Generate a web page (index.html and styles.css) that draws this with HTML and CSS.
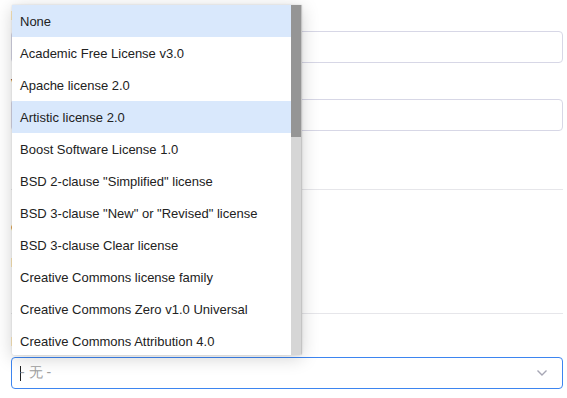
FILE: index.html
```html
<!DOCTYPE html>
<html>
<head>
<meta charset="utf-8">
<link rel="stylesheet" href="styles.css">
</head>
<body>
<div class="page">
  <form class="form">
    <div class="field">
      <label class="label">Name</label>
      <input class="input" type="text">
    </div>
    <div class="field">
      <label class="label">Version</label>
      <input class="input" type="text">
    </div>
    <div class="section sep">
      <div class="opt">Open source</div>
      <div class="opt">Proprietary</div>
    </div>
    <div class="field sep">
      <label class="label">License</label>
      <div class="select">
        <span class="caret"></span><span class="placeholder">- 无 -</span>
        <svg class="chev" width="12" height="8" viewBox="0 0 12 8"><path d="M1.5 1.5 L6 6 L10.5 1.5" fill="none" stroke="#a6a6b4" stroke-width="1.4"/></svg>
      </div>
    </div>
  </form>

  <div class="listbox">
    <ul class="items">
      <li class="item hl">None</li>
      <li class="item">Academic Free License v3.0</li>
      <li class="item">Apache license 2.0</li>
      <li class="item hl">Artistic license 2.0</li>
      <li class="item">Boost Software License 1.0</li>
      <li class="item">BSD 2-clause "Simplified" license</li>
      <li class="item">BSD 3-clause "New" or "Revised" license</li>
      <li class="item">BSD 3-clause Clear license</li>
      <li class="item">Creative Commons license family</li>
      <li class="item">Creative Commons Zero v1.0 Universal</li>
      <li class="item">Creative Commons Attribution 4.0</li>
    </ul>
    <div class="scrollbar"><div class="thumb"></div></div>
  </div>
</div>
</body>
</html>
```
FILE: styles.css
```css
html, body {
  margin: 0;
  padding: 0;
  background: #fff;
}
body {
  font-family: "Liberation Sans", Arial, sans-serif;
  color: #222;
}
.page {
  position: relative;
  width: 567px;
  height: 398px;
  overflow: hidden;
}
.form {
  display: flex;
  flex-direction: column;
  padding: 8px 4px 0 11px;
}
.field {
  display: flex;
  flex-direction: column;
}
.field + .field {
  margin-top: 13px;
}
.label {
  font-size: 13px;
  line-height: 15px;
  color: #333;
  height: 15px;
  margin-bottom: 8px;
}
.input {
  box-sizing: border-box;
  height: 32px;
  border: 1px solid #d7d7e6;
  border-radius: 4px;
  background: #fff;
  margin: 0;
  padding: 0 8px;
}
.sep {
  border-top: 1px solid #e6e6ea;
}
.section {
  margin-top: 58px;
  height: 124px;
  display: flex;
  flex-direction: column;
  gap: 20px;
  padding-top: 30px;
  box-sizing: border-box;
  font-size: 13px;
}
.field.sep {
  margin-top: 0;
  padding-top: 20px;
}
.select {
  box-sizing: border-box;
  height: 32px;
  border: 1px solid #3d85f0;
  border-radius: 4px;
  display: flex;
  align-items: center;
  padding: 0 14px 0 8px;
}
.caret {
  width: 1px;
  height: 15px;
  background: #222;
  margin-right: -1px;
}
.placeholder {
  font-size: 14px;
  color: #a0a0a0;
  flex: 1;
}
.chev {
  display: block;
}
.listbox {
  position: absolute;
  left: 12px;
  top: 5px;
  width: 290px;
  height: 350px;
  background: #fff;
  display: flex;
  overflow: hidden;
  box-shadow: 0 3px 18px rgba(0, 0, 0, 0.18), 0 0 2px rgba(0, 0, 0, 0.15);
  border-radius: 0 0 2px 2px;
}
.items {
  list-style: none;
  margin: 0;
  padding: 0;
  flex: 1;
  overflow: hidden;
}
.item {
  height: 32px;
  line-height: 33px;
  padding-left: 8px;
  font-size: 13px;
  white-space: nowrap;
  color: #222;
}
.item.hl {
  background: #d9e8fc;
}
.scrollbar {
  width: 10px;
  background: #d6d6d6;
  border-right: 1px solid #c4c4c4;
  flex: none;
}
.thumb {
  height: 132px;
  background: #959595;
}
```
